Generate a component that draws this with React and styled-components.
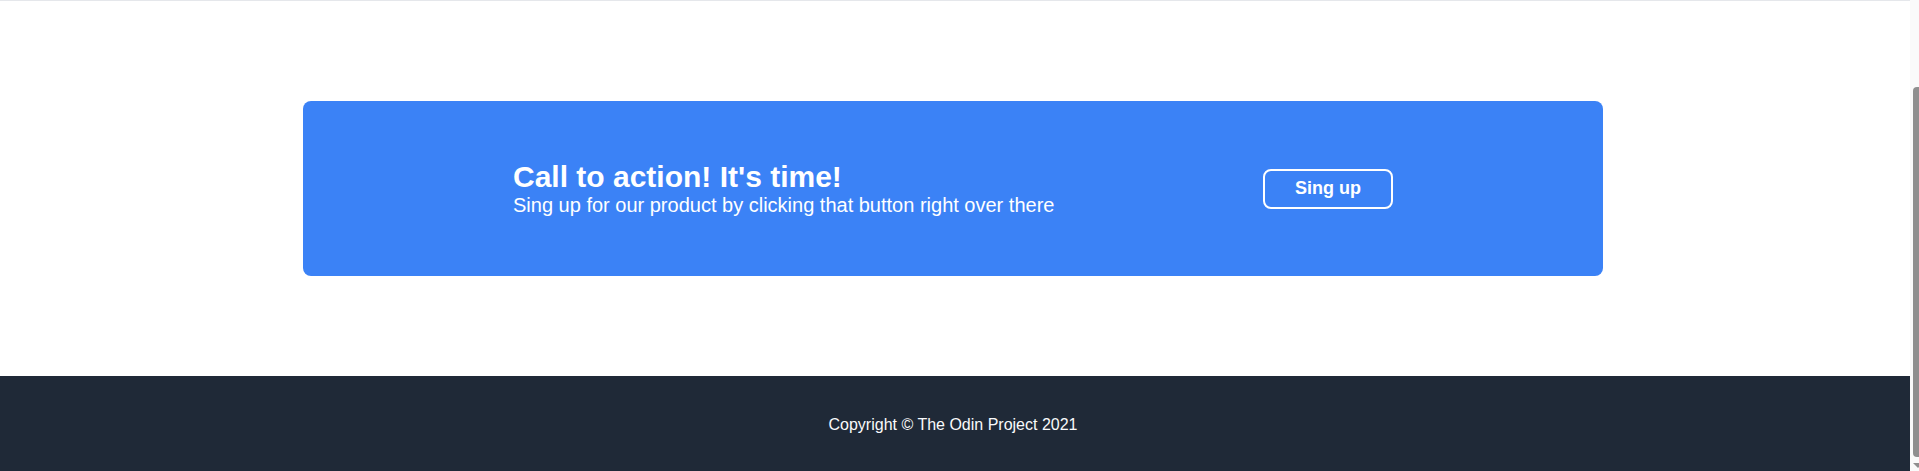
import React from 'react'
import styled, {createGlobalStyle} from 'styled-components'

const GlobalStyle = createGlobalStyle`
  html, body {
    margin: 0;
    padding: 0;
    overflow: hidden;
    background: #ffffff;
    font-family: "Liberation Sans", Arial, sans-serif;
  }
`

const Window = styled.div`
  height: 100vh;
  display: flex;
`

// page scrolled to its bottom: content is pinned to the end, the top overflows
const Viewport = styled.div`
  flex: 1;
  min-width: 0;
  overflow: hidden;
  display: flex;
  flex-direction: column;
  justify-content: flex-end;
  >*{
    flex-shrink: 0;
  }
`

const ScrollTrack = styled.div`
  width: 9px;
  flex-shrink: 0;
  box-sizing: border-box;
  padding: 87px 0 0 3px;
  background: #fafafa;
  overflow: hidden;
  display: flex;
  flex-direction: column;
`

const ScrollThumb = styled.div`
  width: 10px;
  height: 370px;
  flex-shrink: 0;
  background: #8f8f8f;
  border-radius: 4px;
`

const ScrollArrow = styled.div`
  margin-top: 6px;
  width: 0;
  height: 0;
  border-left: 5px solid transparent;
  border-right: 5px solid transparent;
  border-top: 5px solid #8f8f8f;
`

const Quote = styled.section`
  height: 94px;
  background: #e5e7eb;
`

const CtaSection = styled.section`
  padding: 100px 4px 100px 0;
  display: flex;
  justify-content: center;
`

const CtaBox = styled.div`
  width: 1300px;
  height: 175px;
  box-sizing: border-box;
  padding: 0 210px;
  background: #3b82f6;
  border-radius: 8px;
  display: flex;
  justify-content: space-between;
  align-items: center;
  color: #ffffff;
`

const CtaText = styled.div`
  display: flex;
  flex-direction: column;
  >h2{
    margin: 0;
    font-size: 30px;
    font-weight: 700;
    line-height: normal;
  }
  >p{
    margin: 0;
    font-size: 20px;
    line-height: normal;
  }
`

const Button = styled.button`
  width: 130px;
  height: 40px;
  box-sizing: border-box;
  border: 2px solid #ffffff;
  border-radius: 8px;
  background: transparent;
  color: #ffffff;
  font-family: "Liberation Sans", Arial, sans-serif;
  font-size: 18px;
  font-weight: 700;
  cursor: pointer;
`

const Footer = styled.footer`
  height: 95px;
  box-sizing: border-box;
  padding: 40px 4px 0 0;
  background: #1f2937;
  color: #f9fafb;
  font-size: 16px;
  text-align: center;
`

export default function App(){
  return(
    <>
      <GlobalStyle />
      <Window>
        <Viewport>
          <Quote />
          <CtaSection>
            <CtaBox>
              <CtaText>
                <h2>Call to action! It's time!</h2>
                <p>Sing up for our product by clicking that button right over there</p>
              </CtaText>
              <Button>Sing up</Button>
            </CtaBox>
          </CtaSection>
          <Footer>Copyright © The Odin Project 2021</Footer>
        </Viewport>
        <ScrollTrack>
          <ScrollThumb />
          <ScrollArrow />
        </ScrollTrack>
      </Window>
    </>
  )
}
